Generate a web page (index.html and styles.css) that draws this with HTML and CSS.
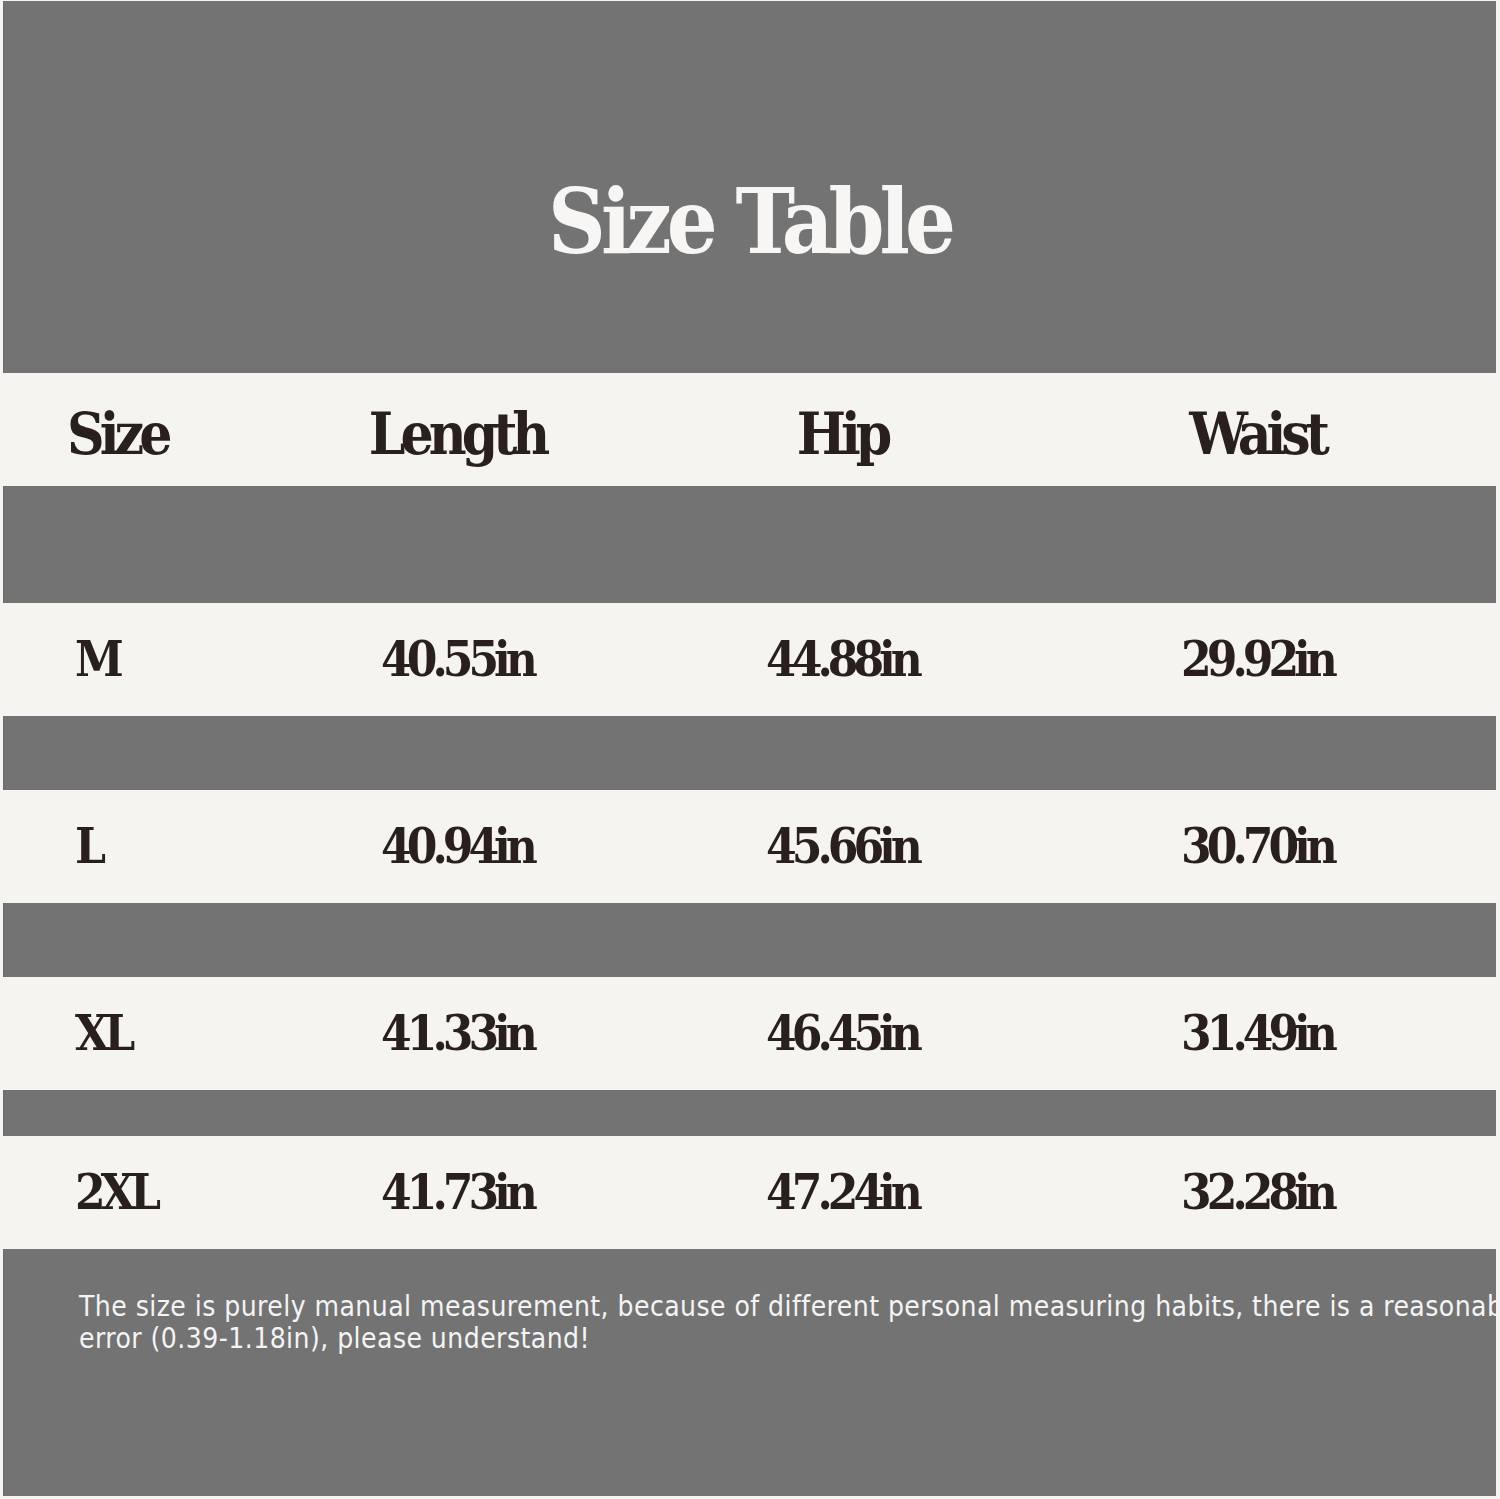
FILE: index.html
```html
<!DOCTYPE html>
<html lang="en">
<head>
<meta charset="utf-8">
<title>Size Table</title>
<link rel="stylesheet" href="styles.css">
</head>
<body>
<div class="panel">
  <div class="title-area"><h1 class="title">Size Table</h1></div>
  <div class="row head">
    <div class="cell first">Size</div>
    <div class="cell">Length</div>
    <div class="cell">Hip</div>
    <div class="cell">Waist</div>
  </div>
  <div class="gap g117"></div>
  <div class="row">
    <div class="cell first">M</div>
    <div class="cell">40.55in</div>
    <div class="cell">44.88in</div>
    <div class="cell">29.92in</div>
  </div>
  <div class="gap g74"></div>
  <div class="row">
    <div class="cell first">L</div>
    <div class="cell">40.94in</div>
    <div class="cell">45.66in</div>
    <div class="cell">30.70in</div>
  </div>
  <div class="gap g74"></div>
  <div class="row">
    <div class="cell first">XL</div>
    <div class="cell">41.33in</div>
    <div class="cell">46.45in</div>
    <div class="cell">31.49in</div>
  </div>
  <div class="gap g46"></div>
  <div class="row">
    <div class="cell first">2XL</div>
    <div class="cell">41.73in</div>
    <div class="cell">47.24in</div>
    <div class="cell">32.28in</div>
  </div>
  <div class="foot">
    <p class="note">The size is purely manual measurement, because of different personal measuring habits, there is a reasonable</p>
    <p class="note">error (0.39-1.18in), please understand!</p>
  </div>
</div>
</body>
</html>
```
FILE: styles.css
```css
html, body {
  margin: 0;
  padding: 0;
  background: #f5f4f1;
}
.panel {
  margin: 1px 4px 3px 3px;
  width: 1493px;
  height: 1495px;
  background: #737373;
  display: flex;
  flex-direction: column;
  overflow: hidden;
  box-shadow: inset 1px 0 0 #6a6a6a;
}
.title-area {
  height: 372px;
  box-sizing: border-box;
  padding-top: 176px;
  flex: none;
}
.title {
  margin: 0;
  text-align: center;
  font-family: "DejaVu Serif", serif;
  font-stretch: condensed;
  font-weight: bold;
  font-size: 89px;
  line-height: 1;
  letter-spacing: -5px;
  color: #f8f6f4;
}
.row {
  flex: none;
  height: 113px;
  box-sizing: border-box;
  background: #f5f4f1;
  display: grid;
  grid-template-columns: 284px 340px 430px 400px 1fr;
  align-items: center;
  font-family: "DejaVu Serif", serif;
  font-stretch: condensed;
  font-weight: bold;
  font-size: 49px;
  line-height: 1;
  letter-spacing: -5px;
  color: #2a1f1f;
}
.row.head {
  font-size: 58px;
  letter-spacing: -5px;
  padding-top: 8px;
}
.cell {
  text-align: center;
}
.cell.first {
  text-align: left;
  padding-left: 72px;
}
.row.head .cell.first {
  padding-left: 64px;
}
.gap { flex: none; }
.g117 { height: 117px; }
.g74 { height: 74px; }
.g46 { height: 46px; }
.foot {
  flex: 1;
  padding: 42px 0 0 76px;
}
.note {
  margin: 0;
  white-space: nowrap;
  font-family: "DejaVu Sans", sans-serif;
  font-stretch: condensed;
  font-size: 28px;
  line-height: 32px;
  letter-spacing: 0.45px;
  color: #f4f4f4;
}
```
